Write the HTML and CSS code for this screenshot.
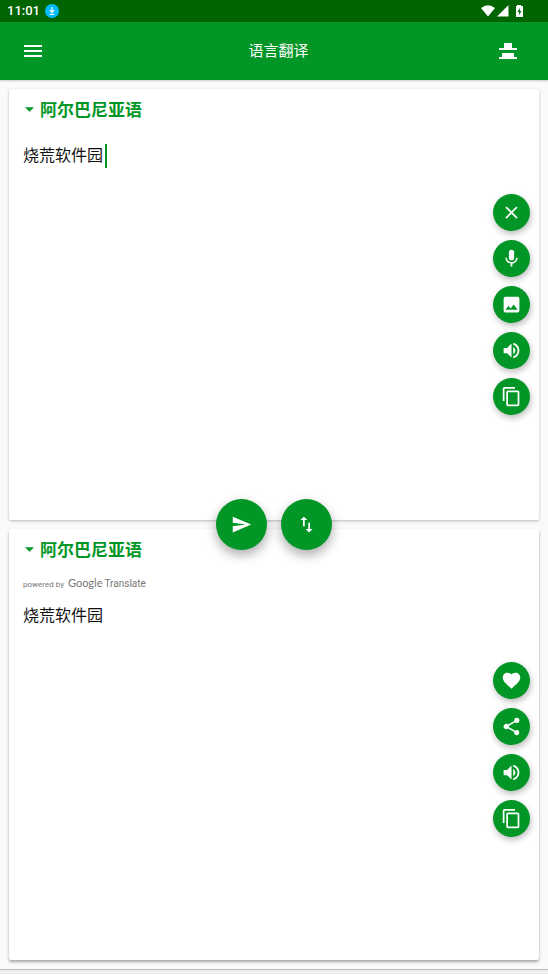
FILE: index.html
```html
<!DOCTYPE html>
<html lang="zh-CN">
<head>
<meta charset="utf-8">
<meta name="viewport" content="width=device-width, initial-scale=1">
<title>语言翻译</title>
<link rel="stylesheet" href="styles.css">
</head>
<body>
<svg class="sprite" aria-hidden="true">
  <symbol id="volume" viewBox="0 0 24 24"><path d="M3 9v6h4l5 5V4L7 9H3zm13.5 3A4.500 4.500 0 0 0 14 7.970v8.050c1.480-.73 2.500-2.250 2.500-4.020zM14 3.230v2.060c2.890.86 5 3.540 5 6.710s-2.110 5.850-5 6.710v2.060c4.010-.91 7-4.490 7-8.770s-2.990-7.860-7-8.770z"/></symbol>
  <symbol id="copy" viewBox="0 0 24 24"><path d="M16 1H4a2 2 0 0 0-2 2v14h2V3h12V1zm3 4H8a2 2 0 0 0-2 2v14a2 2 0 0 0 2 2h11a2 2 0 0 0 2-2V7a2 2 0 0 0-2-2zm0 16H8V7h11v14z"/></symbol>
</svg>
<div class="status">
  <span class="clock">11:01</span>
  <svg class="download" viewBox="0 0 14 14"><circle cx="7" cy="7" r="7" fill="#0bf"/><path d="M7 3v5M4.800 6.200 7 8.300l2.200-2.100M4.800 10.300h4.400" fill="none" stroke="#fff" stroke-width="1.200"/></svg>
  <svg class="signals" viewBox="0 0 42 14"><path d="M0 4Q7-1.500 14 4L7 12.500zM16 12.500 27.500 1v11.500zM36 1h4v1h2v11h-7V2h1z"/><path d="M38.900 4 36.500 8h1.600v3l2.400-4h-1.600z" fill="#006400"/></svg>
</div>
<header class="appbar">
  <button class="bar-button" aria-label="菜单"><svg viewBox="0 0 24 24"><path d="M3 6h18v2H3zm0 5h18v2H3zm0 5h18v2H3z"/></svg></button>
  <h1>语言翻译</h1>
  <button class="bar-button" aria-label="视图"><svg viewBox="0 0 24 24"><path d="M8 4h8v5h5v2H3V9h5zM6 14h12v4h3v2H3v-2h3z"/></svg></button>
</header>
<main>
  <section class="card">
    <label class="language"><svg viewBox="0 0 8 4"><path d="M0 0h8L4 4z"/></svg>
      <select aria-label="源语言"><option>阿尔巴尼亚语</option></select></label>
    <div class="field"><textarea aria-label="原文" spellcheck="false">烧荒软件园</textarea><span class="caret"></span></div>
    <div class="actions">
      <button class="fab" aria-label="清除"><svg viewBox="0 0 24 24"><path d="M19 6.410 17.590 5 12 10.590 6.410 5 5 6.410 10.590 12 5 17.590 6.410 19 12 13.410 17.590 19 19 17.590 13.410 12z"/></svg></button>
      <button class="fab" aria-label="语音"><svg viewBox="0 0 24 24"><path d="M12 14a3 3 0 0 0 3-3V5a3 3 0 0 0-6 0v6a3 3 0 0 0 3 3zm5.300-3c0 3-2.540 5.100-5.300 5.100S6.700 14 6.700 11H5c0 3.410 2.720 6.230 6 6.720V21h2v-3.280c3.280-.48 6-3.300 6-6.720z"/></svg></button>
      <button class="fab" aria-label="图片"><svg viewBox="0 0 24 24"><path d="M21 19V5a2 2 0 0 0-2-2H5a2 2 0 0 0-2 2v14a2 2 0 0 0 2 2h14a2 2 0 0 0 2-2zM8.500 13.500l2.500 3.010L14.500 12l4.500 6H5z"/></svg></button>
      <button class="fab" aria-label="朗读"><svg><use href="#volume"/></svg></button>
      <button class="fab" aria-label="复制"><svg><use href="#copy"/></svg></button>
    </div>
  </section>
  <div class="seam">
    <button class="fab large" aria-label="翻译"><svg viewBox="0 0 24 24"><path d="M2 21 23 12 2 3v7l15 2-15 2z"/></svg></button>
    <button class="fab large" aria-label="交换语言"><svg viewBox="0 0 24 24"><path d="M9 3 5 6.990h3V14h2V6.990h3zM16 17.010V10h-2v7.010h-3L15 21l4-3.990z"/></svg></button>
  </div>
  <section class="card result">
    <label class="language"><svg viewBox="0 0 8 4"><path d="M0 0h8L4 4z"/></svg>
      <select aria-label="目标语言"><option>阿尔巴尼亚语</option></select></label>
    <p class="credit">powered by <span class="brand">Google</span> <span class="product">Translate</span></p>
    <p class="output">烧荒软件园</p>
    <div class="actions">
      <button class="fab" aria-label="收藏"><svg viewBox="0 0 24 24"><path d="m12 21.350-1.450-1.320C5.400 15.360 2 12.280 2 8.500 2 5.420 4.420 3 7.500 3c1.740 0 3.410.81 4.500 2.090C13.090 3.810 14.760 3 16.500 3 19.580 3 22 5.420 22 8.500c0 3.780-3.400 6.860-8.550 11.540z"/></svg></button>
      <button class="fab" aria-label="分享"><svg viewBox="0 0 24 24"><path d="M18 16.080c-.76 0-1.440.3-1.960.77L8.910 12.700a3.300 3.300 0 0 0 0-1.390l7.050-4.110A3 3 0 1 0 15 5c0 .24.040.47.090.7L8.040 9.810a3 3 0 1 0 0 4.380l7.120 4.160a2.920 2.920 0 1 0 2.840-2.270z"/></svg></button>
      <button class="fab" aria-label="朗读译文"><svg><use href="#volume"/></svg></button>
      <button class="fab" aria-label="复制译文"><svg><use href="#copy"/></svg></button>
    </div>
  </section>
</main>
<footer class="bottom"></footer>
</body>
</html>
```
FILE: styles.css
```css
* { box-sizing: border-box; }

:root {
  --green: #029626;
  --dark: #006400;
}

body {
  margin: 0;
  min-height: 100vh;
  display: flex;
  flex-direction: column;
  background: #fafafa;
  color: #111;
  font: 16px/24px Roboto, "Noto Sans CJK SC", sans-serif;
}

h1, p { margin: 0; }
svg { display: block; fill: currentColor; }
button { padding: 0; border: 0; color: #fff; background: none; cursor: pointer; }
.sprite { display: none; }

.status {
  height: 22px;
  padding: 0 25px 0 7px;
  display: flex;
  align-items: center;
  gap: 5px;
  background: var(--dark);
  color: #fff;
}
.clock { font-size: 13px; font-weight: 500; }
.download { width: 14px; height: 14px; }
.signals { width: 42px; height: 14px; margin-left: auto; overflow: visible; }

.appbar {
  height: 58px;
  padding: 0 28px 0 21px;
  display: flex;
  align-items: center;
  justify-content: space-between;
  background: var(--green);
  color: #fff;
  box-shadow: 0 1px 2px #0003;
}
.appbar h1 { padding-left: 16px; font-size: 15px; font-weight: 400; }
.bar-button svg { width: 24px; height: 24px; }

main {
  flex: 1;
  padding: 9px;
  display: flex;
  flex-direction: column;
}

.card {
  position: relative;
  flex: 1 0 0;
  padding: 8px 9px 8px 14px;
  border-radius: 2px;
  background: #fff;
  box-shadow: 0 1px 3px #0004;
}
.result { box-shadow: 0 2px 3px #0005; }

.language {
  width: max-content;
  height: 24px;
  padding-left: 2px;
  display: flex;
  align-items: center;
  gap: 6px;
  color: var(--green);
}
.language svg { width: 9px; height: 5px; }
.language select {
  appearance: none;
  border: 0;
  padding: 0;
  background: none;
  color: inherit;
  font: bold 17px/24px "Noto Sans CJK SC", sans-serif;
}

.field { position: relative; margin-top: 23px; }
.field textarea {
  display: block;
  width: 85%;
  height: 240px;
  padding: 0;
  border: 0;
  outline: 0;
  resize: none;
  background: none;
  color: inherit;
  font: inherit;
}
.caret {
  position: absolute;
  top: 0;
  left: calc(5em + 2px);
  width: 2px;
  height: 24px;
  background: var(--green);
}

.actions {
  position: absolute;
  top: 105px;
  right: 9px;
  display: flex;
  flex-direction: column;
  gap: 9px;
}
.result .actions { top: 133px; }

.fab {
  width: 37px;
  height: 37px;
  display: grid;
  place-items: center;
  border-radius: 50%;
  background: var(--green);
  box-shadow: 1px 3px 6px #0004;
}
.fab svg { width: 21px; height: 21px; }

.seam {
  position: relative;
  z-index: 1;
  height: 9px;
  display: flex;
  align-items: center;
  justify-content: center;
  gap: 14px;
}
.large {
  width: 51px;
  height: 51px;
  box-shadow: 0 5px 12px #0005;
}

.credit {
  height: 16px;
  margin-top: 14px;
  display: flex;
  align-items: baseline;
  gap: 2px;
  color: #777;
  font-size: 8px;
  line-height: 16px;
}
.brand { margin-left: 2px; font: 11px/16px Lato, sans-serif; }
.product { font-size: 10px; }
.output { margin-top: 13px; }

.bottom { height: 5px; border-top: 1px solid #bbb; background: #eee; }
```
